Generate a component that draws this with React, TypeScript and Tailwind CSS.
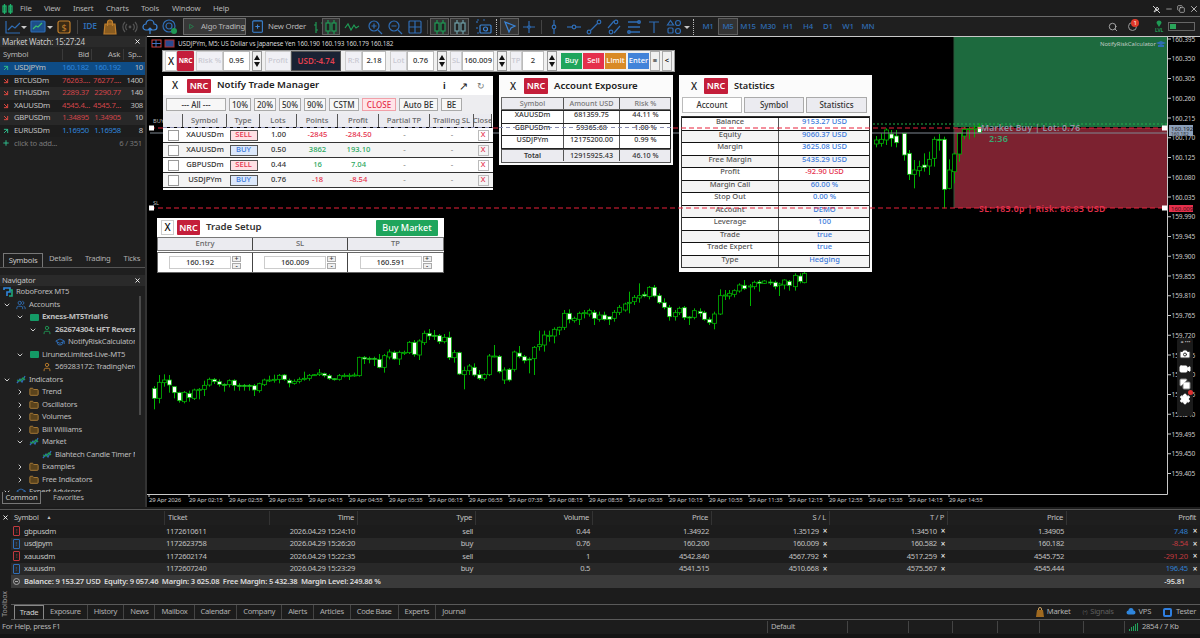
import {
  ArrowDownRight,
  ArrowUpRight,
  Camera,
  ChevronDown,
  ChevronRight,
  Copy,
  Folder,
  GraduationCap,
  Minus,
  Plus,
  Search,
  Settings,
  User,
  Users,
  Video,
  X,
} from "lucide-react";
import type { ReactNode } from "react";

const BLUE = "#2f6db5";
const GREEN = "#1f9a55";
const ORANGE = "#c07f2c";

// left part of the chart, read as [x, bodyTop, bodyBottom, high, low, bear]
const candlesA = [
  [8,385,415,378,448,1],[20,367,415,345,430,0],[31,360,368,343,380,0],[42,360,375,345,398,1],[53,380,398,378,415,1],[65,398,422,395,428,1],
  [76,397,425,393,430,0],[87,400,413,392,425,1],[98,390,415,386,420,0],[110,388,390,384,418,0],[121,376,388,362,408,0],[132,358,375,353,380,0],
  [143,358,365,354,372,1],[155,365,373,358,380,1],[166,373,375,370,395,1],[177,362,374,358,382,0],[188,361,376,358,392,1],[200,376,378,370,392,1],
  [211,376,378,372,392,1],[222,376,378,372,392,1],[233,377,390,372,408,1],[244,371,392,368,398,0],[255,360,374,356,378,0],[267,360,362,347,366,0],
  [278,358,360,344,368,0],[289,346,358,342,370,0],[300,345,358,342,362,1],[311,361,369,356,382,1],[323,364,370,358,374,0],[334,358,364,352,370,0],
  [345,355,357,335,362,0],[356,346,355,342,362,0],[367,344,346,342,348,0],[379,339,344,327,348,0],[390,341,347,338,352,1],[401,347,356,342,360,1],
  [412,356,358,354,362,1],[423,347,358,342,362,0],[435,346,348,340,352,0],[446,346,348,340,360,0],[457,345,348,338,350,0],[468,292,347,290,350,0],
  [480,292,297,288,312,1],[491,295,297,290,310,1],[502,295,297,290,318,1],[513,298,322,282,325,1],[525,287,322,282,338,0],[536,276,291,268,298,0],
  [547,277,297,272,300,1],[558,277,297,272,315,0],[570,277,278,272,285,0],[581,247,278,243,282,0],[592,247,283,240,290,1],[603,243,285,238,300,0],
  [614,220,248,212,255,0],[625,220,228,207,240,1],[637,226,228,210,240,1],[648,227,245,222,252,1],[659,232,245,222,250,0],[670,232,293,215,300,1],
  [681,278,293,270,308,0],[692,278,342,275,345,1],[703,332,344,320,388,0],[715,318,332,312,345,0],[726,322,345,310,350,1],[737,344,355,330,360,1],
  [748,344,355,340,362,0],[759,288,344,282,348,0],[770,288,290,255,292,0],[781,289,335,285,340,1],[793,330,360,322,372,0],[804,328,360,324,365,1],
  [815,276,328,272,335,0],[826,279,290,258,295,1],[838,290,302,285,310,1],[849,297,299,292,340,1],[860,262,296,258,345,0],[872,254,260,212,272,0],
  [883,225,255,212,275,0],[894,226,228,212,245,0],[905,208,228,202,250,0],[916,202,210,200,225,0],[928,160,202,150,210,0],[939,160,178,148,190,1],
  [950,175,182,170,188,0],[961,160,178,155,195,0],[972,158,160,150,175,0],[984,152,162,146,170,0],[995,157,175,150,195,1],[1006,165,178,155,185,0],
  [1018,165,178,155,182,1],[1029,170,178,168,195,1],[1040,157,175,150,185,0],[1051,142,157,135,165,0],[1063,132,150,128,155,0],[1074,127,130,95,160,0],
  [1085,112,125,105,135,0],[1096,107,114,70,128,0],[1107,103,108,95,112,1],[1118,82,110,78,118,0],[1130,82,108,75,112,1],[1141,107,128,100,132,1],
  [1152,128,142,115,148,1],[1163,142,170,135,182,1],[1175,158,170,150,182,0],[1186,145,158,140,165,0],[1197,143,173,138,180,1],[1208,171,173,168,195,1],
  [1219,152,172,145,178,0],[1231,154,160,145,170,1],[1242,158,178,152,182,1],[1253,178,188,172,195,1],[1264,162,190,155,208,0],[1276,107,162,88,165,0],
  [1287,105,107,90,120,0],[1298,100,108,90,118,0],[1309,92,103,88,112,0],[1320,75,93,70,98,0],[1331,76,86,60,90,1],[1343,78,80,72,138,0],
  [1354,67,80,62,88,0],[1365,66,70,60,95,1],[1376,63,70,60,72,0],[1388,66,68,58,75,1],[1399,67,80,62,88,1],[1410,72,76,68,108,0],
  [1421,60,75,58,88,0],[1432,64,76,60,92,1],[1444,46,80,40,92,0],[1455,48,64,40,70,1],[1466,40,68,36,70,0],
];

// right part, already in zoomed coordinates of the trade box area
const candlesB = [
  [-72,330,342,318,352,0],[-57,328,340,310,350,0],[-42,300,330,295,345,0],[-27,312,325,300,350,1],[-12,318,338,300,352,1],
  [13,310,375,310,392,1],[28,370,433,360,450,1],[43,420,433,390,475,0],[58,410,422,392,440,0],[73,405,412,370,425,1],[88,388,408,365,435,0],
  [103,328,385,320,410,0],[118,328,330,312,362,1],[133,328,478,320,535,1],[148,420,475,388,478,0],[163,372,425,368,460,0],[178,310,372,308,395,0],
  [193,298,318,290,328,0],[208,296,298,290,328,0],[223,294,296,285,322,0],[238,290,308,280,310,1],
];

const prices = [
  "160.395","160.350","160.305","160.260","160.215","160.170","160.125","160.080","160.035","159.990","159.945",
  "159.900","159.855","159.810","159.765","159.720","159.675","159.630","159.585","159.540","159.495","159.450","159.405",
];

const times = [
  "29 Apr 2026","29 Apr 02:15","29 Apr 02:55","29 Apr 03:35","29 Apr 04:15","29 Apr 04:55","29 Apr 05:35","29 Apr 06:15","29 Apr 06:55","29 Apr 07:35",
  "29 Apr 08:15","29 Apr 08:55","29 Apr 09:35","29 Apr 10:15","29 Apr 10:55","29 Apr 11:35","29 Apr 12:15","29 Apr 12:55","29 Apr 13:35","29 Apr 14:15","29 Apr 14:55",
];

const watch = [
  { s: "USDJPYm", b: "160.182", a: "160.192", sp: "10", up: true, bg: "bg-[#0e4c86]" },
  { s: "BTCUSDm", b: "76263....", a: "76277....", sp: "1400", up: false, bg: "bg-[#1d1d1d]" },
  { s: "ETHUSDm", b: "2289.37", a: "2290.77", sp: "140", up: false, bg: "bg-[#282828]" },
  { s: "XAUUSDm", b: "4545.4...", a: "4545.7...", sp: "308", up: false, bg: "bg-[#1d1d1d]" },
  { s: "GBPUSDm", b: "1.34895", a: "1.34905", sp: "10", up: false, bg: "bg-[#282828]" },
  { s: "EURUSDm", b: "1.16950", a: "1.16958", sp: "8", up: true, bg: "bg-[#1d1d1d]" },
];

const positions = [
  { s: "gbpusdm", t: "1172610611", d: "2026.04.29 15:24:10", ty: "sell", v: "0.44", p: "1.34922", sl: "1.35129", tp: "1.34510", c: "1.34905", pr: "7.48", bg: "bg-[#1c1c1c]" },
  { s: "usdjpym", t: "1172623758", d: "2026.04.29 15:26:20", ty: "buy", v: "0.76", p: "160.200", sl: "160.009", tp: "160.582", c: "160.182", pr: "-8.54", bg: "bg-[#282828]" },
  { s: "xauusdm", t: "1172602174", d: "2026.04.29 15:22:35", ty: "sell", v: "1", p: "4542.840", sl: "4567.792", tp: "4517.259", c: "4545.752", pr: "-291.20", bg: "bg-[#1c1c1c]" },
  { s: "xauusdm", t: "1172607240", d: "2026.04.29 15:23:29", ty: "buy", v: "0.5", p: "4541.515", sl: "4510.668", tp: "4575.567", c: "4545.444", pr: "196.45", bg: "bg-[#282828]" },
];

const trades = [
  { s: "XAUUSDm", ty: "SELL", l: "1.00", pts: "-2845", pr: "-284.50", bg: "bg-white" },
  { s: "XAUUSDm", ty: "BUY", l: "0.50", pts: "3862", pr: "193.10", bg: "bg-[#f4f4f4]" },
  { s: "GBPUSDm", ty: "SELL", l: "0.44", pts: "16", pr: "7.04", bg: "bg-white" },
  { s: "USDJPYm", ty: "BUY", l: "0.76", pts: "-18", pr: "-8.54", bg: "bg-[#f4f4f4]" },
];

const stats = [
  ["Balance", "9153.27 USD"], ["Equity", "9060.37 USD"], ["Margin", "3625.08 USD"], ["Free Margin", "5435.29 USD"],
  ["Profit", "-92.90 USD"], ["Margin Call", "60.00 %"], ["Stop Out", "0.00 %"], ["Account", "DEMO"],
  ["Leverage", "100"], ["Trade", "true"], ["Trade Expert", "true"], ["Type", "Hedging"],
];

const exposure = [
  ["XAUUSDm", "681359.75", "44.11 %"],
  ["GBPUSDm", "59365.68", "1.00 %"],
  ["USDJPYm", "12175200.00", "0.99 %"],
];

const tree = [
  { pad: "pl-[3px]", icon: "robo", label: "RoboForex MT5", chev: false },
  { pad: "pl-[3px]", icon: "users", label: "Accounts", chev: true },
  { pad: "pl-[16px]", icon: "server", label: "Exness-MT5Trial16", chev: true, bold: true },
  { pad: "pl-[29px]", icon: "userG", label: "262674304: HFT Reverse", chev: true, bold: true },
  { pad: "pl-[55px]", icon: "hat", label: "NotifyRiskCalculator", chev: false },
  { pad: "pl-[16px]", icon: "server", label: "LirunexLimited-Live-MT5", chev: true },
  { pad: "pl-[42px]", icon: "userO", label: "569283172: TradingNerd", chev: false },
  { pad: "pl-[3px]", icon: "wave", label: "Indicators", chev: true },
  { pad: "pl-[16px]", icon: "folder", label: "Trend", chev: true, closed: true },
  { pad: "pl-[16px]", icon: "folder", label: "Oscillators", chev: true, closed: true },
  { pad: "pl-[16px]", icon: "folder", label: "Volumes", chev: true, closed: true },
  { pad: "pl-[16px]", icon: "folder", label: "Bill Williams", chev: true, closed: true },
  { pad: "pl-[16px]", icon: "wave", label: "Market", chev: true },
  { pad: "pl-[42px]", icon: "wave", label: "Blahtech Candle Timer MT5", chev: false },
  { pad: "pl-[16px]", icon: "folder", label: "Examples", chev: true, closed: true },
  { pad: "pl-[16px]", icon: "folder", label: "Free Indicators", chev: true, closed: true },
  { pad: "pl-[3px]", icon: "hat", label: "Expert Advisors", chev: true },
];

function Glyph({ w = 16, children }: { w?: number; children: ReactNode }) {
  return (
    <svg width={w} height="16" viewBox="0 0 16 16" fill="none" strokeWidth="1.2" className="shrink-0">
      {children}
    </svg>
  );
}

function Caret() {
  return (
    <svg width="6" height="16" viewBox="0 0 6 16" className="shrink-0">
      <path d="M0 7h6l-3 3z" fill="#c8c8c8" />
    </svg>
  );
}

function Sep() {
  return <span className="mx-[2px] h-[14px] w-px shrink-0 bg-[#444]" />;
}

function Dots() {
  return <span className="mx-[2px] h-[16px] w-0 shrink-0 border-l border-dotted border-[#bbb]" />;
}

function Active({ children, cls }: { children: ReactNode; cls: string }) {
  return <span className={`flex h-[17px] shrink-0 items-center justify-center border border-[#5d5d5d] bg-[#333] ${cls}`}>{children}</span>;
}

function Cell({ children }: { children: ReactNode }) {
  return <span className="flex w-[20px] shrink-0 items-center justify-center">{children}</span>;
}

function TwoCandles({ color = GREEN }: { color?: string }) {
  return (
    <Glyph>
      <path d="M5 1v14M11 1v14" stroke={color} />
      <rect x="3" y="4" width="4" height="8" fill="#222" stroke={color} />
      <rect x="9" y="4" width="4" height="8" fill="#222" stroke={color} />
    </Glyph>
  );
}

function Toolbar() {
  return (
    <div className="flex h-[19px] items-center whitespace-nowrap bg-[#1f1f1f] pl-[5px] text-[7.8px] tracking-[-0.2px] text-[#b9b9b9]">
      <Glyph><path d="M1 2v12h14M3 11l4-4 3 2 5-5" stroke={BLUE} /></Glyph>
      <Caret />
      <span className="w-[3px]" />
      <Glyph>
        <rect x="1" y="2" width="14" height="11" rx="1" fill="#1d4f8a" stroke={BLUE} />
        <path d="M3 10l3-3 2 1 4-4" stroke="#3fbf70" />
      </Glyph>
      <span className="w-px" />
      <Caret />
      <span className="w-[3px]" />
      <Glyph>
        <rect x="2" y="2" width="12" height="12" rx="2" stroke={ORANGE} fill="#3a2a14" />
        <text x="8" y="11.5" textAnchor="middle" fontSize="9" fill={ORANGE}>$</text>
      </Glyph>
      <span className="w-[3px]" />
      <Sep />
      <span className="w-[20px] shrink-0 text-center text-[8.5px] font-semibold text-[#2f6db5]">IDE</span>
      <Cell>
        <Glyph><path d="M3 5h10l1 10H2zM5.5 7V3.5a2.5 2.5 0 0 1 5 0V7" stroke={ORANGE} fill="#8a5c20" /></Glyph>
      </Cell>
      <Cell>
        <Glyph><circle cx="8" cy="8" r="1.4" fill="#555" /><path d="M5 5a4 4 0 0 0 0 6M11 5a4 4 0 0 1 0 6M3 3a7 7 0 0 0 0 10M13 3a7 7 0 0 1 0 10" stroke="#555" /></Glyph>
      </Cell>
      <Cell>
        <Glyph><path d="M4 11a3 3 0 0 1 0-6 4 4 0 0 1 8 0 3 3 0 0 1 0 6zM8 15V9M6 11l2-2 2 2" stroke="#3b85d8" /></Glyph>
      </Cell>
      <Cell>
        <Glyph><circle cx="7" cy="7" r="6" stroke={BLUE} /><circle cx="7" cy="7" r="3" stroke={BLUE} /><circle cx="12" cy="12" r="3" fill={GREEN} /></Glyph>
      </Cell>
      <span className="w-[3px]" />
      <span className="flex h-[17px] w-[63px] shrink-0 items-center gap-[7px] border border-[#6a6a6a] bg-[#383838] pl-[5px]">
        <svg width="8" height="9" viewBox="0 0 8 9"><path d="M1 1l6 3.5L1 8z" fill="none" stroke={GREEN} /></svg>
        Algo Trading
      </span>
      <span className="w-[5px]" />
      <span className="flex w-[52px] shrink-0 items-center gap-[3px]">
        <Glyph w={14}><rect x="2" y="1" width="11" height="13" rx="1" stroke="#3b85d8" /><path d="M5 7.5h5M7.5 5v5" stroke="#3b85d8" /></Glyph>
        New Order
      </span>
      <span className="w-[7px]" />
      <Cell>
        <Glyph><path d="M4 3v11M2 6h2M4 11h2M11 1v10M9 4h2M11 8h2" stroke={GREEN} /></Glyph>
      </Cell>
      <Active cls="w-[18px] ml-[-8px]"><TwoCandles /></Active>
      <span className="w-[2px]" />
      <Cell>
        <Glyph><path d="M1 9l3-4 3 6 3-5 2 3 3-2" stroke={GREEN} /></Glyph>
      </Cell>
      <span className="w-[3px]" />
      <Cell>
        <Glyph><circle cx="7" cy="7" r="5" stroke={BLUE} /><path d="M11 11l4 4M4.5 7h5M7 4.5v5" stroke={BLUE} /></Glyph>
      </Cell>
      <Cell>
        <Glyph><circle cx="7" cy="7" r="5" stroke={BLUE} /><path d="M11 11l4 4M4.5 7h5" stroke={BLUE} /></Glyph>
      </Cell>
      <Cell>
        <Glyph><rect x="2" y="2" width="12" height="12" rx="1" stroke={BLUE} /><path d="M2 8h12M8 2v12" stroke={BLUE} /></Glyph>
      </Cell>
      <Sep />
      <Active cls="w-[19px]"><TwoCandles /></Active>
      <span className="w-px" />
      <Active cls="w-[19px]"><TwoCandles color="#6fa0a8" /></Active>
      <span className="w-[5px]" />
      <Cell>
        <Glyph><path d="M1 4V1h3M7 1h3M1 8v3M1 14h2" stroke={BLUE} strokeDasharray="2 1" /><rect x="4" y="6" width="11" height="8" rx="1" stroke="#3b85d8" /><circle cx="9.5" cy="10" r="2" stroke="#3b85d8" /></Glyph>
      </Cell>
      <Dots />
      <span className="w-px" />
      <Active cls="w-[19px]">
        <Glyph><path d="M3 3l10 4-4 2-2 4z" stroke="#3b85d8" /></Glyph>
      </Active>
      <Cell>
        <Glyph><path d="M8 2v12M2 8h12" stroke={BLUE} /><circle cx="8" cy="8" r="1.2" fill="#1f1f1f" stroke={BLUE} /></Glyph>
      </Cell>
      <Sep />
      <Cell>
        <Glyph><path d="M8 1v14" stroke={BLUE} /><circle cx="8" cy="8" r="1.8" fill="#1f1f1f" stroke={BLUE} /></Glyph>
      </Cell>
      <Cell>
        <Glyph><path d="M1 8h14" stroke={BLUE} /><circle cx="8" cy="8" r="1.8" fill="#1f1f1f" stroke={BLUE} /></Glyph>
      </Cell>
      <Cell>
        <Glyph><path d="M3 13L13 3" stroke={BLUE} /><circle cx="3" cy="13" r="1.8" fill="#1f1f1f" stroke={BLUE} /><circle cx="13" cy="3" r="1.8" fill="#1f1f1f" stroke={BLUE} /></Glyph>
      </Cell>
      <Cell>
        <Glyph><path d="M2 9l6-7M8 14l6-7" stroke={BLUE} /><circle cx="10" cy="3" r="1.8" stroke={BLUE} /><circle cx="5" cy="13" r="1.8" stroke={BLUE} /></Glyph>
      </Cell>
      <Cell>
        <Glyph><path d="M2 3h12M2 8h12M2 13h12" stroke={BLUE} strokeWidth="1.5" /><circle cx="13" cy="3" r="1.4" stroke={BLUE} /><circle cx="3" cy="13" r="1.4" stroke={BLUE} /></Glyph>
      </Cell>
      <Cell>
        <Glyph><path d="M3 3h10M8 3v11" stroke={BLUE} /></Glyph>
      </Cell>
      <Cell>
        <Glyph><path d="M4.5 1.5l3 4.5h-6z" stroke={BLUE} /><circle cx="12" cy="4" r="2.5" stroke={BLUE} /><rect x="2" y="9" width="5" height="5" rx="1" stroke={BLUE} /><circle cx="12" cy="12" r="2.5" stroke={BLUE} /></Glyph>
      </Cell>
      <Caret />
      <span className="w-px" />
      <Dots />
      <span className="w-[2px]" />
      <span className="flex items-center font-medium text-[#2f6db5]">
        <span className="w-[20px] shrink-0 text-center">M1</span>
        <Active cls="w-[20px]">M5</Active>
        {["M15", "M30", "H1", "H4", "D1", "W1", "MN"].map((m) => (
          <span key={m} className="w-[20px] shrink-0 text-center">{m}</span>
        ))}
      </span>
      <span className="flex-1" />
      <Search size={10} className="mr-[10px] text-[#bbb]" />
      <span className="relative mr-[17px]">
        <span className="block h-[9px] w-[9px] rounded-full border border-[#999]" />
        <span className="absolute left-[3px] top-[-3px] flex h-[8px] w-[8px] items-center justify-center rounded-full bg-[#e03a2a] text-[6px] text-white">1</span>
      </span>
      <span className="mr-[4px] flex w-[10px] flex-col items-center text-[5px] font-bold leading-[6px] text-[#1f9a55]">
        <svg width="6" height="7" viewBox="0 0 6 7"><path d="M3 7L0.5 3a2.5 2.5 0 1 1 5 0z" fill={GREEN} /></svg>
        LVL
      </span>
      <span className="mr-[5px] flex h-[9px] w-[27px] border border-[#666] p-px">
        <span className="h-full w-[6px] bg-[#2aa55a]" />
      </span>
    </div>
  );
}

function MenuBar() {
  return (
    <div className="flex h-[16px] items-center bg-[#1c1c1c] pt-[2px] text-[7.8px] tracking-[-0.2px] text-[#b5b5b5]">
      <span className="flex w-[20px] justify-center pl-[1px] pr-[6px]">
        <svg width="11" height="12" viewBox="0 0 11 12" fill="none" stroke="#1fb06a" strokeWidth="1.3"><rect x="1" y="3" width="3" height="6" /><rect x="7" y="3" width="3" height="6" /><path d="M2.5 1v10M8.5 1v10" /></svg>
      </span>
      <span className="w-[24px]">File</span>
      <span className="w-[29px]">View</span>
      <span className="w-[33px]">Insert</span>
      <span className="w-[35px]">Charts</span>
      <span className="w-[31px]">Tools</span>
      <span className="w-[41px]">Window</span>
      <span>Help</span>
      <span className="flex-1" />
      <span className="flex items-center gap-[4px] pr-[1px] text-[#cfcfcf]">
        <svg width="9" height="9" viewBox="0 0 9 9" stroke="currentColor" fill="none"><path d="M1 1l7 7M2 7l3-5 2 2-5 3z" /></svg>
        <Minus size={8} />
        <Copy size={8} />
        <X size={10} />
      </span>
    </div>
  );
}

function MarketWatch() {
  return (
    <div className="flex flex-col whitespace-nowrap text-[7.7px] tracking-[-0.25px]">
      <div className="flex h-[11px] items-center justify-between bg-[#2a2a2a] pl-[2px] pr-[4px] text-[8px] text-[#c8c8c8]">
        Market Watch: 15:27:24
        <X size={7} className="text-white" strokeWidth={3} />
      </div>
      <div className="grid h-[15px] grid-cols-[62px_29px_32px_22px] items-center bg-[#232323] text-[#b5b5b5]">
        <span className="pl-[3px]">Symbol</span>
        <span className="border-l border-[#3a3a3a] pr-[2px] text-right">Bid</span>
        <span className="border-l border-[#3a3a3a] pr-[3px] text-right">Ask</span>
        <span className="border-l border-[#3a3a3a] pl-[4px]">Sp...</span>
      </div>
      {watch.map((r) => (
        <div key={r.s} className={`grid h-[12.5px] grid-cols-[62px_29px_32px_22px] items-center ${r.bg}`}>
          <span className="flex items-center gap-[4px] pl-[2px] text-[#c0c0c0]">
            {r.up ? <ArrowUpRight size={8} strokeWidth={3} className="text-[#2fb98a]" /> : <ArrowDownRight size={8} strokeWidth={3} className="text-[#d9483f]" />}
            {r.s}
          </span>
          <span className={`pr-[2px] text-right ${r.up ? "text-[#2f86dd]" : "text-[#d2454a]"}`}>{r.b}</span>
          <span className={`pr-[2px] text-right ${r.up ? "text-[#2f86dd]" : "text-[#d2454a]"}`}>{r.a}</span>
          <span className="pr-[2px] text-right text-[#c0c0c0]">{r.sp}</span>
        </div>
      ))}
      <div className="flex h-[13px] items-center justify-between bg-[#1f1f1f] pl-[2px] pr-[3px] text-[#777]">
        <span className="flex items-center gap-[4px]">
          <Plus size={8} strokeWidth={3} className="text-[#2fb98a]" />
          click to add...
        </span>
        <span>6 / 351</span>
      </div>
    </div>
  );
}

function TreeIcon({ kind }: { kind: string }) {
  if (kind === "users") return <Users size={10} className="text-[#2f6db5]" strokeWidth={2.2} />;
  if (kind === "userG") return <User size={10} className="text-[#1f9a55]" strokeWidth={2.2} />;
  if (kind === "userO") return <User size={10} className="text-[#c07f2c]" strokeWidth={2.2} />;
  if (kind === "hat") return <GraduationCap size={10} className="text-[#2f6db5]" strokeWidth={2.4} />;
  if (kind === "folder") return <Folder size={10} className="fill-[#5a431c] text-[#b8863a]" />;
  if (kind === "server") return <span className="block h-[7px] w-[9px] rounded-[1px] bg-[#149a66]" />;
  if (kind === "robo")
    return (
      <svg width="10" height="10" viewBox="0 0 10 10" fill="none" strokeWidth="1.6">
        <path d="M1 3V1h6v4H4v4" stroke="#2f86dd" />
        <path d="M6 3h3v6H6" stroke="#1fa87a" />
      </svg>
    );
  return (
    <svg width="10" height="10" viewBox="0 0 10 10" fill="none" strokeWidth="1.3">
      <path d="M1 8l3-4 2 3 3-6" stroke="#2f6db5" />
      <path d="M1 5l3 1 3-3 2 2" stroke="#1f9a55" />
    </svg>
  );
}

function Navigator() {
  return (
    <div className="relative flex flex-1 flex-col overflow-hidden text-[7.7px] tracking-[-0.25px] text-[#bcbcbc]">
      <div className="flex h-[11px] shrink-0 items-center justify-between bg-[#2a2a2a] pl-[2px] pr-[4px] text-[#c0c0c0]">
        Navigator
        <X size={7} className="text-white" strokeWidth={3} />
      </div>
      <div className="w-[135px] shrink-0 overflow-hidden whitespace-nowrap">
        {tree.map((n, i) => (
          <div key={i} className={`flex h-[12.5px] items-center ${n.pad} ${n.bold ? "font-bold" : ""}`}>
            {n.chev && (n.closed ? <ChevronRight size={8} strokeWidth={3} className="mr-[5px] shrink-0 text-[#ccc]" /> : <ChevronDown size={8} strokeWidth={3} className="mr-[5px] shrink-0 text-[#ccc]" />)}
            <span className="mr-[3px] flex w-[10px] shrink-0 justify-center"><TreeIcon kind={n.icon} /></span>
            {n.label}
          </div>
        ))}
      </div>
      <span className="absolute left-[139px] top-[21px] h-[119px] w-[2px] bg-[#4a4a4a]" />
    </div>
  );
}

function LeftColumn() {
  return (
    <div className="flex w-[147px] shrink-0 flex-col border-r-2 border-[#333] bg-[#1f1f1f]">
      <MarketWatch />
      <div className="flex-1" />
      <div className="flex h-[17px] items-end gap-[13px] border-b border-[#555] pl-[3px] text-[7.7px] tracking-[-0.25px] text-[#b0b0b0]">
        <span className="mr-[-7px] flex h-[14px] w-[40px] items-center justify-center border border-b-0 border-[#777] text-[#c8c8c8]">Symbols</span>
        <span className="pb-[2px]">Details</span>
        <span className="pb-[2px]">Trading</span>
        <span className="pb-[2px]">Ticks</span>
      </div>
      <div className="h-[7px]" />
      <div className="flex h-[232px] flex-col">
        <Navigator />
        <div className="flex h-[15px] shrink-0 items-start gap-[12px] pl-[2px] text-[7.7px] tracking-[-0.25px] text-[#b0b0b0]">
          <span className="flex h-[12px] w-[39px] items-center justify-center border border-t-0 border-[#777] bg-[#1f1f1f] text-[#c8c8c8]">Common</span>
          <span>Favorites</span>
        </div>
      </div>
    </div>
  );
}

function Nrc({ cls }: { cls: string }) {
  return <span className={`flex items-center justify-center rounded-[1px] bg-[#c41e3a] text-white ${cls}`}>NRC</span>;
}

function Spin() {
  return (
    <span className="flex h-[20px] w-[10px] shrink-0 flex-col items-center justify-center gap-[2px] border border-[#999] bg-[#f0f0f0]">
      <svg width="6" height="5" viewBox="0 0 6 5"><path d="M3 0l3 5H0z" fill="#111" /></svg>
      <svg width="6" height="5" viewBox="0 0 6 5"><path d="M3 5L0 0h6z" fill="#111" /></svg>
    </span>
  );
}

function Lbl({ cls, children }: { cls: string; children: ReactNode }) {
  return <span className={`flex h-[20px] shrink-0 items-center justify-center border border-[#ccc] bg-[#f0f0f5] text-[#c9c9d2] ${cls}`}>{children}</span>;
}

function Val({ cls, children }: { cls: string; children: ReactNode }) {
  return <span className={`flex h-[20px] shrink-0 items-center justify-center border border-[#bbb] bg-white text-[#333] ${cls}`}>{children}</span>;
}

function QuickBar() {
  return (
    <div className="absolute left-[15px] top-[14px] z-10 flex h-[22px] w-[513px] items-center whitespace-nowrap border border-[#9a9a9a] bg-[#f0f0f0] pl-[2px] text-[7.6px] font-medium">
      <span className="flex h-[20px] w-[12px] shrink-0 items-center justify-center border border-[#ccc] bg-white text-[10px] text-[#222]">X</span>
      <Nrc cls="h-[20px] w-[17px] shrink-0 text-[6.5px] font-bold" />
      <span className="w-[2px]" />
      <Lbl cls="w-[27px]">Risk %</Lbl>
      <Val cls="w-[27px]">0.95</Val>
      <span className="w-[2px]" />
      <Spin />
      <span className="w-[3px]" />
      <Lbl cls="w-[26px]">Profit</Lbl>
      <span className="flex h-[20px] w-[50px] shrink-0 items-center justify-center border border-[#555] bg-[#1a2233] text-[8px] font-semibold text-[#e2404f]">USD:-4.74</span>
      <span className="w-[4px]" />
      <Lbl cls="w-[17px]">R:R</Lbl>
      <Val cls="w-[24px]">2.18</Val>
      <span className="w-[4px]" />
      <Lbl cls="w-[17px]">Lot</Lbl>
      <Val cls="w-[27px]">0.76</Val>
      <span className="w-[3px]" />
      <Spin />
      <span className="w-[3px]" />
      <Lbl cls="w-[12px]">SL</Lbl>
      <Val cls="w-[32px]">160.009</Val>
      <span className="w-[3px]" />
      <Spin />
      <span className="w-[3px]" />
      <Lbl cls="w-[12px]">TP</Lbl>
      <Val cls="w-[22px]">2</Val>
      <span className="w-[3px]" />
      <Spin />
      <span className="w-[4px]" />
      <span className="flex h-[16px] w-[21px] shrink-0 items-center justify-center bg-[#1fa55c] text-white">Buy</span>
      <span className="ml-[1px] flex h-[16px] w-[21px] shrink-0 items-center justify-center bg-[#e5304c] text-white">Sell</span>
      <span className="ml-[1px] flex h-[16px] w-[21px] shrink-0 items-center justify-center bg-[#d98a26] text-white">Limit</span>
      <span className="ml-[2px] flex h-[16px] w-[21px] shrink-0 items-center justify-center bg-[#4283d9] text-white">Enter</span>
      <span className="ml-[1px] flex h-[20px] w-[10px] shrink-0 items-center justify-center border border-[#aaa] text-black">≡</span>
      <span className="ml-[2px] flex h-[20px] w-[10px] shrink-0 items-center justify-center border border-[#aaa] text-black">&lt;</span>
    </div>
  );
}

function Btn({ cls, children }: { cls: string; children: ReactNode }) {
  return <span className={`flex h-[13px] shrink-0 items-center justify-center border border-[#aaa] bg-[#f7f7f7] text-[#333] ${cls}`}>{children}</span>;
}

function TradeManager() {
  const cols = "grid grid-cols-[20px_44px_33px_37px_41px_41px_51px_44px_18px] items-center";
  const th = "flex h-[13px] items-center justify-center border-r border-[#555] bg-[#ebebf0] text-[#666]";
  return (
    <div className="absolute left-[16px] top-[40px] z-10 flex h-[114px] w-[330px] flex-col whitespace-nowrap bg-white text-[7.6px] font-medium">
      <div className="flex h-[19px] items-center pl-[9px] pr-[8px] text-[#222]">
        <span className="w-[15px] text-[10px]">X</span>
        <Nrc cls="h-[14px] w-[24px] text-[9px] font-semibold" />
        <span className="ml-[6px] text-[9.6px] font-semibold">Notify Trade Manager</span>
        <span className="flex-1" />
        <span className="w-[16px] text-[9px] font-bold">i</span>
        <span className="w-[18px] text-[11px] leading-[10px]">↗</span>
        <span className="text-[9px] text-[#777]">↻</span>
      </div>
      <div className="flex h-[19px] items-center gap-[3px] bg-[#ededf0] pl-[3px] text-[8px]">
        <Btn cls="w-[60px]">--- All ---</Btn>
        <Btn cls="w-[22px]">10%</Btn>
        <Btn cls="w-[22px]">20%</Btn>
        <Btn cls="w-[22px]">50%</Btn>
        <Btn cls="w-[22px]">90%</Btn>
        <Btn cls="w-[30px]">CSTM</Btn>
        <span className="flex h-[13px] w-[34px] shrink-0 items-center justify-center border border-[#f0a0a8] bg-[#ffe4e8] text-[#e5304c]">CLOSE</span>
        <Btn cls="w-[39px]">Auto BE</Btn>
        <Btn cls="w-[21px]">BE</Btn>
      </div>
      <div className={`${cols} border-b border-black`}>
        <span className={th} />
        {["Symbol", "Type", "Lots", "Points", "Profit", "Partial TP", "Trailing SL", "Close"].map((h) => (
          <span key={h} className={`${th} overflow-hidden`}>{h}</span>
        ))}
      </div>
      {trades.map((t, i) => {
        const c = t.pts.startsWith("-") ? "text-[#e5304c]" : "text-[#2aa860]";
        return (
          <div key={i} className={`${cols} h-[15px] border-b border-[#333] ${t.bg} text-[#333]`}>
            <span className="flex justify-center">
              <span className="block h-[11px] w-[11px] border border-[#999] bg-white" />
            </span>
            <span className="text-center">{t.s}</span>
            <span className={`mx-auto flex h-[11px] w-[28px] items-center justify-center border border-[#555] ${t.ty === "SELL" ? "bg-[#ffe0e4] text-[#e5304c]" : "bg-[#dce8fb] text-[#3b7bdc]"}`}>{t.ty}</span>
            <span className="text-center">{t.l}</span>
            <span className={`text-center ${c}`}>{t.pts}</span>
            <span className={`text-center ${c}`}>{t.pr}</span>
            <span className="text-center text-[#888]">-</span>
            <span className="text-center text-[#888]">-</span>
            <span className="mx-auto flex h-[11px] w-[11px] items-center justify-center border border-[#bbb] text-[#e5304c]">X</span>
          </div>
        );
      })}
    </div>
  );
}

function TradeSetup() {
  const input = "flex h-[13px] w-[62px] items-center justify-center border border-[#ccc] bg-white";
  const spin = "flex h-[6px] w-[9px] items-center justify-center border border-[#aaa] bg-[#eee] text-[7px] leading-[6px]";
  return (
    <div className="absolute left-[10px] top-[182px] z-10 flex h-[55px] w-[287px] flex-col whitespace-nowrap bg-white text-[7.6px] font-medium text-[#333]">
      <div className="flex h-[19px] items-center pl-[4px] pr-[6px]">
        <span className="flex h-[15px] w-[13px] items-center justify-center border border-[#ccc] text-[10px] text-[#111]">X</span>
        <Nrc cls="ml-[3px] h-[15px] w-[23px] text-[9px] font-semibold" />
        <span className="ml-[6px] text-[9.6px] font-semibold">Trade Setup</span>
        <span className="ml-auto flex h-[16px] w-[62px] items-center justify-center rounded-[1px] bg-[#1fa55c] text-[9px] text-white">Buy Market</span>
      </div>
      <div className="grid h-[14px] grid-cols-[95px_95px_95px] border border-[#777] bg-[#ebebf0] text-[#666]">
        <span className="flex items-center justify-center border-r border-[#444]">Entry</span>
        <span className="flex items-center justify-center border-r border-[#444]">SL</span>
        <span className="flex items-center justify-center">TP</span>
      </div>
      <div className="mt-[1px] grid flex-1 grid-cols-[95px_95px_95px] border border-[#666] bg-white">
        {["160.192", "160.009", "160.591"].map((v, i) => (
          <span key={v} className={`flex items-center justify-center gap-[1px] ${i < 2 ? "border-r border-[#444]" : ""}`}>
            <span className={input}>{v}</span>
            <span className="flex flex-col gap-[1px]">
              <span className={spin}>+</span>
              <span className={spin}>-</span>
            </span>
          </span>
        ))}
      </div>
    </div>
  );
}

function Exposure() {
  const cols = "grid grid-cols-[62px_56px_51px]";
  return (
    <div className="absolute left-[352px] top-[39px] z-10 flex h-[90px] w-[174px] flex-col whitespace-nowrap bg-[#fbfbfb] px-[2px] text-[7.2px] font-medium text-[#444]">
      <div className="flex h-[22px] items-center pl-[9px]">
        <span className="w-[14px] text-[10px] text-[#222]">X</span>
        <Nrc cls="h-[16px] w-[24px] text-[9px] font-semibold" />
        <span className="ml-[6px] text-[9.6px] font-semibold text-[#222]">Account Exposure</span>
      </div>
      <div className={`${cols} h-[13px] items-center border border-[#666] bg-[#ebebf0] text-center text-[#777]`}>
        <span className="border-r border-[#555]">Symbol</span>
        <span className="border-r border-[#555]">Amount USD</span>
        <span>Risk %</span>
      </div>
      {exposure.map((r) => (
        <div key={r[0]} className={`${cols} h-[12.5px] overflow-hidden border-x border-t border-[#222] bg-white text-center leading-[6px] text-[#333]`}>
          <span className="border-r border-[#555]">{r[0]}</span>
          <span className="border-r border-[#555]">{r[1]}</span>
          <span>{r[2]}</span>
        </div>
      ))}
      <div className="h-[1px] bg-[#222]" />
      <div className={`${cols} h-[14px] items-center border border-[#555] bg-[#ebebf0] text-center text-[#333]`}>
        <span className="border-r border-[#555] font-semibold">Total</span>
        <span className="border-r border-[#555]">12915925.43</span>
        <span>46.10 %</span>
      </div>
    </div>
  );
}

function Statistics() {
  return (
    <div className="absolute left-[532px] top-[39px] z-10 flex h-[197px] w-[193px] flex-col whitespace-nowrap bg-[#fbfbfb] px-[2px] text-[7.5px] font-medium text-[#444]">
      <div className="flex h-[22px] items-center pl-[10px]">
        <span className="w-[13px] text-[10px] text-[#222]">X</span>
        <Nrc cls="h-[16px] w-[24px] text-[9px] font-semibold" />
        <span className="ml-[6px] text-[9.2px] font-semibold text-[#222]">Statistics</span>
      </div>
      <div className="flex h-[16px] gap-[2px] pl-[1px] text-[8px] text-[#333]">
        <span className="flex w-[60px] items-center justify-center border border-[#bbb] bg-white">Account</span>
        <span className="flex w-[60px] items-center justify-center border border-[#aaa] bg-[#ebebf0]">Symbol</span>
        <span className="flex w-[61px] items-center justify-center border border-[#aaa] bg-[#ebebf0]">Statistics</span>
      </div>
      <div className="mt-[3px] border border-[#333]">
        {stats.map((r, i) => (
          <div key={r[0]} className={`grid h-[12.5px] grid-cols-[97px_91px] overflow-hidden border-t border-[#111] text-center leading-[6px] ${i % 2 ? "bg-[#f4f4f4]" : "bg-white"}`}>
            <span className="border-r border-[#555] text-[#555]">{r[0]}</span>
            <span className={r[0] === "Profit" ? "text-[#e5304c]" : "text-[#3b7bdc]"}>{r[1]}</span>
          </div>
        ))}
      </div>
    </div>
  );
}

function Candle({ x, t, b, h, l, bear }: { x: number; t: number; b: number; h: number; l: number; bear: boolean }) {
  return (
    <g>
      <path d={`M${x + 0.5} ${h}V${l}`} stroke="#00b300" />
      <rect x={x - 1.5} y={t} width="4" height={Math.max(b - t, 1)} fill={bear ? "#ffffff" : "#000000"} stroke="#00b300" strokeWidth="0.8" />
    </g>
  );
}

function ChartDrawing() {
  return (
    <svg className="absolute left-0 top-0" width="1053" height="471" viewBox="147 36 1053 471" fontFamily="Noto Sans, sans-serif">
      <rect x="954" y="37" width="213" height="90" fill="#1d6a3e" />
      <rect x="954" y="128" width="213" height="80" fill="#7c2230" />
      <path d="M954 37v171" stroke="#2a5a3a" />
      {candlesA.map((c, i) => {
        const x = Math.round(150 + c[0] / 2.24);
        return <Candle key={i} x={x} t={260 + c[1] / 3} b={260 + c[2] / 3} h={260 + c[3] / 3} l={260 + c[4] / 3} bear={c[5] === 1} />;
      })}
      {candlesB.map((c, i) => {
        const x = Math.round(900 + c[0] / 3);
        return <Candle key={i} x={x} t={30 + c[1] / 3} b={30 + c[2] / 3} h={30 + c[3] / 3} l={30 + c[4] / 3} bear={c[5] === 1} />;
      })}
      <path d="M1167.5 37v457.5H147" stroke="#c8c8c8" fill="none" />
      <path d="M147 36.5h1053" stroke="#c8c8c8" />
      {prices.map((p, i) => {
        const y = 39 + i * 19.75;
        return (
          <g key={p}>
            <path d={`M1168 ${y}h3`} stroke="#c8c8c8" />
            <text x="1171.5" y={y + 2.5} fontSize="6.6" letterSpacing="-0.1" fill="#c8c8c8">{p}</text>
          </g>
        );
      })}
      {times.map((t, i) => (
        <g key={t}>
          <path d={`M${149 + i * 40} 494v3`} stroke="#c8c8c8" />
          <text x={149 + i * 40} y="501.5" fontSize="6" letterSpacing="-0.15" fill="#c8c8c8">{t}</text>
        </g>
      ))}
      <text x="153" y="123" fontSize="5.6" fill="#bbb">BUY</text>
      <text x="153" y="205" fontSize="5.6" fill="#bbb">SL</text>
      <text x="178" y="45.5" fontSize="6.4" letterSpacing="-0.1" fill="#d6d6d6">USDJPYm, M5:  US Dollar vs Japanese Yen  160.190 160.193 160.179 160.182</text>
      <rect x="152" y="40" width="9" height="7" fill="none" stroke="#d04040" />
      <path d="M152 43.5h9M156 40v7" stroke="#4070c0" />
      <rect x="165" y="40" width="9" height="7" fill="#2a4a90" stroke="#b03030" />
      <text x="1100" y="45.5" fontSize="5.9" fill="#c0cbc4">NotifyRiskCalculator</text>
      <path d="M1156 43l5-2 5 2-5 2zM1158 45v2h6v-2" fill="#2f6db5" />
    </svg>
  );
}

function ChartOverlay() {
  return (
    <svg className="pointer-events-none absolute left-0 top-0 z-20" width="1053" height="471" viewBox="147 36 1053 471" fontFamily="Noto Sans, sans-serif">
      <path d="M873 124h294" stroke="#22b04a" strokeDasharray="2 2" />
      <path d="M150 128h13M493 128h6M673 128h494" stroke="#e8203a" strokeDasharray="5 3" />
      <path d="M163 127.5h330M499 127.5h174" stroke="#8b8fb3" strokeDasharray="4 3" />
      <path d="M150 133h13M493 133h6M673 133h6M872 133h295" stroke="#7f8791" />
      <path d="M150 208h1017" stroke="#e8203a" strokeDasharray="5 3" />
      <rect x="149" y="125.5" width="5" height="5" fill="#fff" />
      <rect x="149" y="205.5" width="5" height="5" fill="#fff" />
      <rect x="1162" y="125.5" width="5" height="5" fill="#fff" />
      <rect x="1162" y="205.5" width="5" height="5" fill="#fff" />
      <text x="981" y="131" fontSize="8.6" fontWeight="600" letterSpacing="0.3" fill="#8f96a5">Market Buy | Lot: 0.76</text>
      <text x="989" y="141.5" fontSize="9" fontWeight="600" fill="#37a970" letterSpacing="0.3">2:36</text>
      <text x="979" y="212" fontSize="8.6" fontWeight="600" letterSpacing="0.45" fill="#e5304c">SL: 183.0p | Risk: 86.83 USD</text>
      <rect x="1169" y="125" width="24" height="11" fill="#8da0ba" />
      <text x="1171" y="130.5" fontSize="6" fill="#222">160.192</text>
      <text x="1171" y="135.5" fontSize="4.8" fill="#333">160.182</text>
      <rect x="1169" y="205" width="24" height="7" fill="#e5304c" />
      <text x="1171" y="211" fontSize="6" fill="#3a0a10">160.009</text>
    </svg>
  );
}

function FloatTool() {
  return (
    <div className="absolute left-[1030px] top-[302px] z-30 flex h-[78px] w-[16px] flex-col items-center gap-[3px] rounded-[3px] bg-[#1a1a1a] pt-[1px] text-white">
      <span className="text-[5px] leading-[6px] text-[#bbb]">⚭ •••</span>
      <Camera size={12} fill="#fff" stroke="#333" />
      <Video size={12} fill="#fff" stroke="#fff" />
      <Copy size={12} fill="#fff" stroke="#888" />
      <span className="relative">
        <Settings size={12} fill="#fff" stroke="#fff" />
        <span className="absolute right-[-2px] top-[-3px] h-[5px] w-[5px] rounded-full bg-[#e03030]" />
      </span>
    </div>
  );
}

function Toolbox() {
  const cols = "grid grid-cols-[154px_105px_88px_118px_117px_119px_118px_118px_119px_133px]";
  const hd = "flex h-[14px] items-center justify-end border-r border-[#333] pr-[3px]";
  const cell = "flex items-center justify-end pr-[3px]";
  return (
    <div className="flex h-[131px] flex-col whitespace-nowrap bg-[#1c1c1c] text-[7.6px] tracking-[-0.3px] text-[#c0c0c0]">
      <div className="mt-[2px] h-[2px] shrink-0 border-t border-[#555]" />
      <div className="flex h-[109px] shrink-0">
        <div className="flex w-[11px] shrink-0 flex-col items-center justify-between pb-[3px] pt-[1px]">
          <X size={7} strokeWidth={3} className="mt-[2px] text-white" />
          <span className="rotate-180 text-[7px] tracking-normal text-[#999] [writing-mode:vertical-rl]">Toolbox</span>
        </div>
        <div className="flex flex-1 flex-col">
          <div className={`${cols} bg-[#1e1e1e]`}>
            <span className="flex h-[14px] items-center gap-[8px] border-r border-[#333] pl-[3px]">
              Symbol <span className="text-[5px]">▲</span>
            </span>
            <span className="flex h-[14px] items-center border-r border-[#333] pl-[3px]">Ticket</span>
            <span className={hd}>Time</span>
            <span className={hd}>Type</span>
            <span className={hd}>Volume</span>
            <span className={hd}>Price</span>
            <span className={hd}>S / L</span>
            <span className={hd}>T / P</span>
            <span className={hd}>Price</span>
            <span className="flex h-[14px] items-center justify-end pr-[4px]">Profit</span>
          </div>
          {positions.map((p, i) => (
            <div key={i} className={`${cols} h-[12.5px] ${p.bg}`}>
              <span className="flex items-center gap-[4px] pl-[2px]">
                <span className={`flex h-[10px] w-[7px] items-center justify-center rounded-[1px] border text-[6px] leading-none ${p.ty === "sell" ? "border-[#c0393f] text-[#c0393f]" : "border-[#2f6db5] text-[#2f6db5]"}`}>!</span>
                {p.s}
              </span>
              <span className="flex items-center pl-[1px]">{p.t}</span>
              <span className={cell}>{p.d}</span>
              <span className={cell}>{p.ty}</span>
              <span className={cell}>{p.v}</span>
              <span className={cell}>{p.p}</span>
              <span className={cell}>{p.sl}<span className="ml-[4px] text-[8px] leading-none text-white">×</span></span>
              <span className={cell}>{p.tp}<span className="ml-[4px] text-[8px] leading-none text-white">×</span></span>
              <span className={cell}>{p.c}</span>
              <span className={`${cell} pr-[2px]`}>
                <span className={p.pr.startsWith("-") ? "text-[#c0393f]" : "text-[#2f7fd0]"}>{p.pr}</span>
                <span className="ml-[5px] text-[8px] leading-none text-white">×</span>
              </span>
            </div>
          ))}
          <div className="flex h-[13px] items-center justify-between bg-[#3a3a3a] pl-[2px] pr-[15px] text-[7.6px] font-semibold tracking-[-0.2px] text-[#dcdcdc]">
            <span className="flex items-center gap-[4px]">
              <span className="flex h-[7px] w-[7px] items-center justify-center rounded-full border border-[#aaa]"><span className="h-px w-[3px] bg-[#aaa]" /></span>
              Balance: 9 153.27 USD&nbsp; Equity: 9 057.46&nbsp; Margin: 3 625.08&nbsp; Free Margin: 5 432.38&nbsp; Margin Level: 249.86 %
            </span>
            <span>-95.81</span>
          </div>
          <div className="h-[16px]" />
          <div className="flex h-[16px] items-end border-y border-[#5a5a5a] pl-[3px] text-[#b0b0b0]">
            <span className="flex h-[14px] w-[30px] items-center justify-center border-x border-t border-[#888] text-[#d0d0d0]">Trade</span>
            {["Exposure", "History", "News", "Mailbox", "Calendar", "Company", "Alerts", "Articles", "Code Base", "Experts", "Journal"].map((t, i) => (
              <span key={t} className={`flex h-[14px] items-center px-[6px] ${i ? "border-l border-[#444]" : ""}`}>{t}</span>
            ))}
            <span className="flex-1" />
            <span className="flex h-[14px] items-center gap-[3px] pr-[4px]">
              <svg width="8" height="10" viewBox="0 0 8 10"><path d="M1 3h6l1 7H0z" fill="#a06a20" /><path d="M2.5 3V2a1.5 1.5 0 0 1 3 0v1" stroke="#c9a060" fill="none" /></svg>
              <span className="mr-[9px]">Market</span>
              <span className="text-[6px] text-[#555]">(•)</span>
              <span className="mr-[9px] text-[#5e5e5e]">Signals</span>
              <svg width="10" height="9" viewBox="0 0 10 9"><path d="M2.5 6.5a2 2 0 0 1 0-4 2.5 2.5 0 0 1 5 0 2 2 0 0 1 0 4z" fill="#2f86dd" /></svg>
              <span className="mr-[9px]">VPS</span>
              <span className="block h-[9px] w-[9px] rounded-[2px] border-2 border-[#2f7fe0]" />
              <span className="pl-[1px]">Tester</span>
            </span>
          </div>
        </div>
      </div>
      <div className="flex h-[14px] shrink-0 items-center text-[#b5b5b5]">
        <span className="w-[767px] pl-[2px]">For Help, press F1</span>
        <span className="w-[80px] border-l border-[#444] pl-[3px]">Default</span>
        <span className="h-[12px] w-[61px] border-l border-[#444]" />
        <span className="h-[12px] w-[44px] border-l border-[#444]" />
        <span className="h-[12px] w-[45px] border-l border-[#444]" />
        <span className="h-[12px] w-[42px] border-l border-[#444]" />
        <span className="h-[12px] w-[44px] border-l border-[#444]" />
        <span className="h-[12px] w-[41px] border-l border-[#444]" />
        <span className="flex items-center gap-[4px] border-l border-[#444] pl-[4px]">
          <svg width="9" height="8" viewBox="0 0 9 8" fill="#1fa55c"><path d="M0 6h1v2H0zM2 4h1v4H2zM4 3h1v5H4zM6 1h1v7H6zM8 0h1v8H8z" /></svg>
          2854 / 7 Kb
        </span>
      </div>
      <div className="flex-1 bg-[#141414]" />
    </div>
  );
}

export default function App() {
  return (
    <div className="flex h-[638px] w-[1200px] flex-col overflow-hidden bg-[#1c1c1c] font-['Noto_Sans',sans-serif]">
      <MenuBar />
      <div className="h-px bg-[#6a6a6a]" />
      <Toolbar />
      <div className="flex h-[471px] shrink-0">
        <LeftColumn />
        <div className="relative flex-1 overflow-hidden bg-black">
          <ChartDrawing />
          <QuickBar />
          <TradeManager />
          <TradeSetup />
          <Exposure />
          <Statistics />
          <ChartOverlay />
          <FloatTool />
        </div>
      </div>
      <Toolbox />
    </div>
  );
}
